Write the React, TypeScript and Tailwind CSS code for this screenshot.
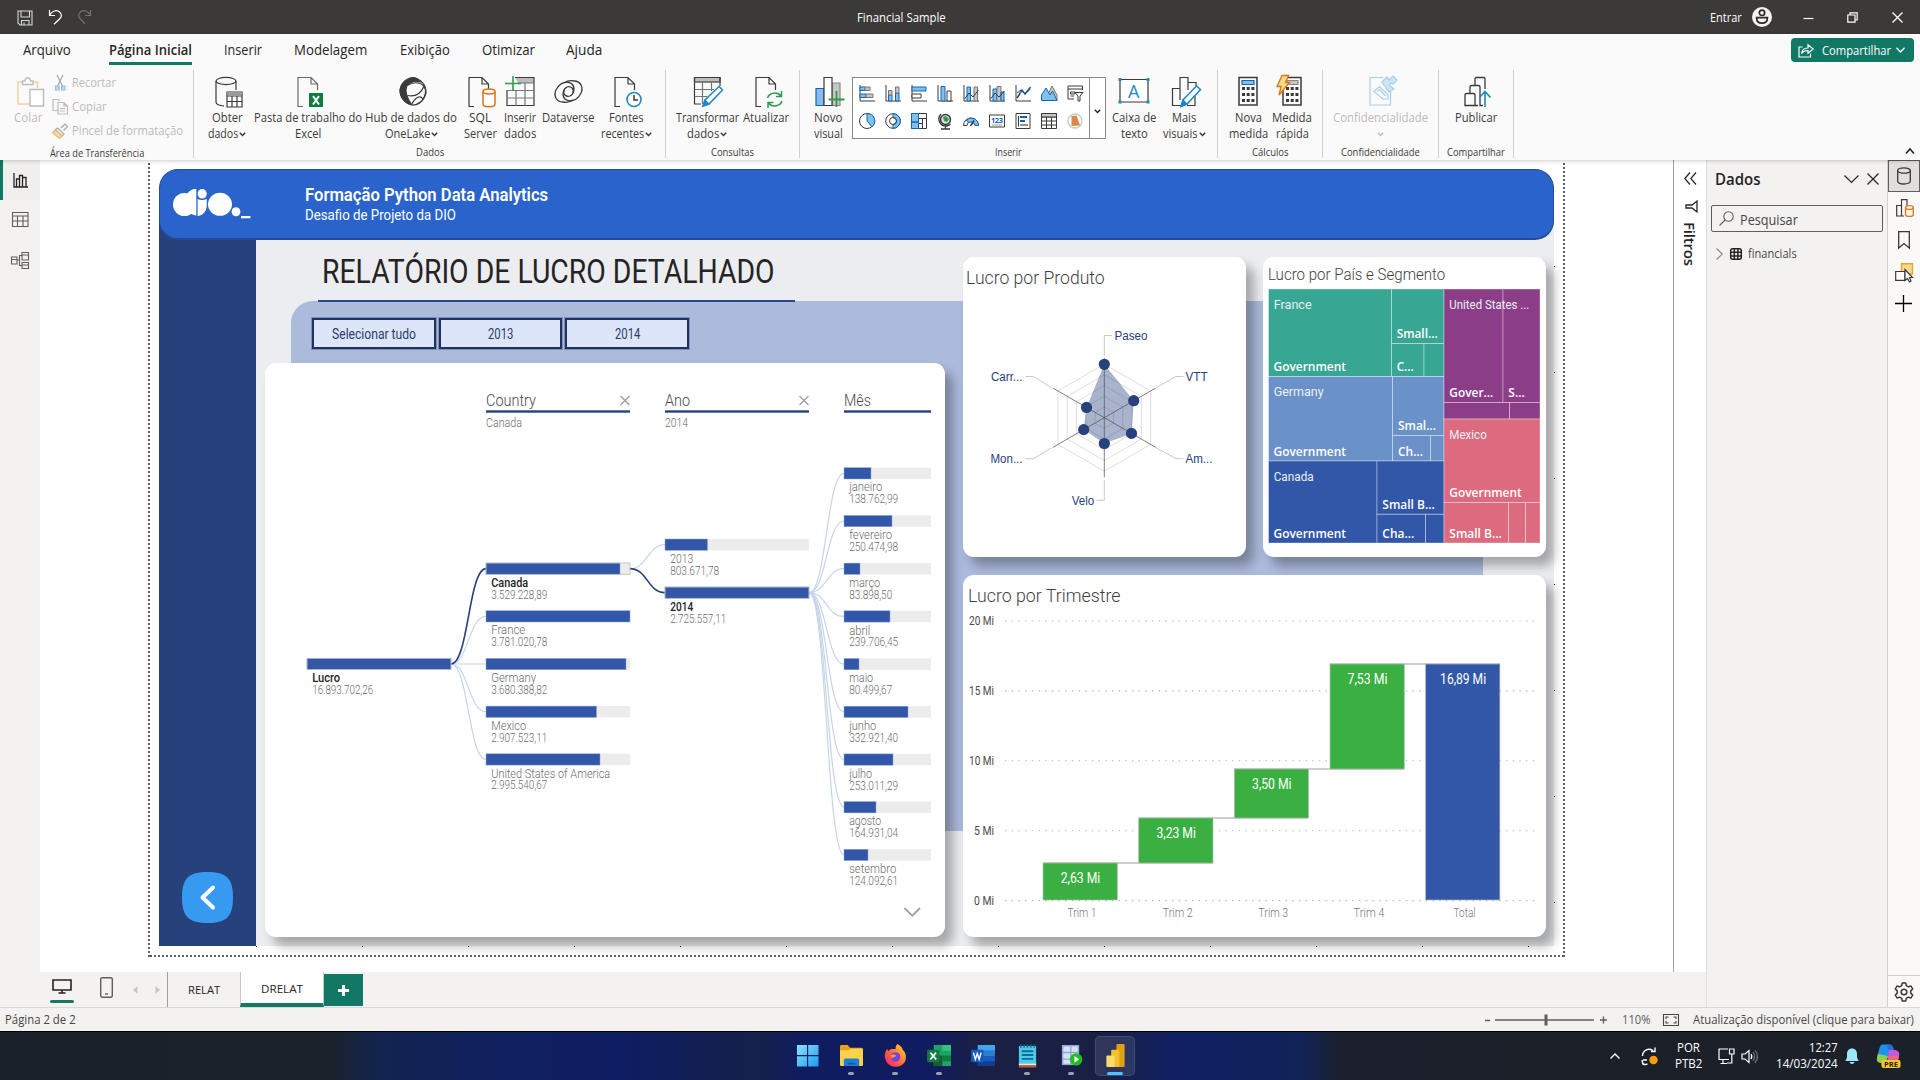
import React, { useLayoutEffect, useRef, useState } from "react";

type Kids = { children?: React.ReactNode };

/* Text set to an exact measure: the glyph run is condensed to the width given. */
function Fit({ w, className = "", children }: { w: number; className?: string } & Kids) {
  const ref = useRef<HTMLSpanElement>(null);
  const [k, setK] = useState(1);
  useLayoutEffect(() => {
    const el = ref.current;
    if (el && el.offsetWidth) setK(w / el.offsetWidth);
  }, [w]);
  return (
    <span className={"inline-block shrink-0 overflow-visible text-left " + className} style={{ width: w }}>
      <span ref={ref} className="inline-block origin-left whitespace-nowrap" style={{ transform: `scaleX(${k})` }}>
        {children}
      </span>
    </span>
  );
}

function Svg({ w, h, x = 0, y = 0, sw = 1.2, className = "", children }: { w: number; h: number; x?: number; y?: number; sw?: number; className?: string } & Kids) {
  return (
    <svg width={w} height={h} viewBox={`${x} ${y} ${w} ${h}`} fill="none" stroke="currentColor" strokeWidth={sw} className={"shrink-0 overflow-visible " + className}>
      {children}
    </svg>
  );
}

function ST({ x, y, w, s = 12, c = "#6f6f6f", b = 400, f = "Roboto, sans-serif", children }: { x: number; y: number; w: number; s?: number; c?: string; b?: number; f?: string; children: string }) {
  return (
    <text x={x} y={y} fontSize={s} fill={c} stroke="none" fontWeight={b} fontFamily={f} textLength={w} lengthAdjust="spacingAndGlyphs">
      {children}
    </text>
  );
}

const Caret = ({ className = "" }: { className?: string }) => (
  <Svg w={7} h={5} sw={1.4} className={className}>
    <path d="M0.8 0.8 L3.5 3.6 L6.2 0.8" />
  </Svg>
);

/* ---------- title bar ---------- */
function TitleBar() {
  return (
    <header className="grid h-[34px] grid-cols-3 items-center bg-[#3b3a39] text-white">
      <div className="flex items-center gap-[14px] pl-[17px]">
        <Svg w={17} h={16} sw={1.1} className="mt-[2px] text-[#d8d8d8]">
          <path d="M1 1 H15 V15 H3 L1 13 Z M4 1 V7 H12.5 V1 M4.5 15 V10.5 H12 V15 M7 12.5 V15" />
        </Svg>
        <Svg w={15} h={16} sw={1.2}>
          <path d="M1.5 1 V6.5 H7 M1.5 6.3 C4 1.6 8.5 0.6 11.3 2.7 C14 5 13.8 7.5 12 9.5 L6 15.3" />
        </Svg>
        <Svg w={15} h={16} sw={1.2} className="text-[#73716f]">
          <path d="M13.5 1 V6.5 H8 M13.5 6.3 C11 1.6 6.5 0.6 3.7 2.7 C1 5 1.2 7.5 3 9.5 L8 14.8" />
        </Svg>
      </div>
      <div className="flex justify-center">
        <Fit w={89} className="mt-px mr-[118px] text-[12px]">Financial Sample</Fit>
      </div>
      <div className="flex items-center justify-end pr-[17px]">
        <Fit w={32} className="mt-px mr-[10px] text-[12px]">Entrar</Fit>
        <Svg w={20} h={20} className="mr-[31px]">
          <circle cx="10" cy="10" r="10" fill="#f3f2f1" stroke="none" />
          <circle cx="10" cy="5.8" r="2.7" stroke="#2b2a29" strokeWidth="1.7" />
          <path d="M4.6 10.7 H15.4 C15.4 14 13.4 16.2 10 16.2 C6.6 16.2 4.6 14 4.6 10.7 Z" stroke="#2b2a29" strokeWidth="1.7" />
        </Svg>
        <Svg w={11} h={11} className="mr-[33px]"><path d="M0.5 6.5 H10.5" /></Svg>
        <Svg w={11} h={11} className="mr-[34px]"><path d="M0.8 3 H8 V10.2 H0.8 Z M3 3 V0.9 H10.2 V8 H8" /></Svg>
        <Svg w={11} h={11} sw={1.3}><path d="M0.5 0.5 L10.5 10.5 M10.5 0.5 L0.5 10.5" /></Svg>
      </div>
    </header>
  );
}

/* ---------- tabs ---------- */
const menu: { t: string; w: number; ml: string; on?: boolean }[] = [
  { t: "Arquivo", w: 48, ml: "ml-[23px]" },
  { t: "Página Inicial", w: 83, ml: "ml-[38px]", on: true },
  { t: "Inserir", w: 38, ml: "ml-[32px]" },
  { t: "Modelagem", w: 73, ml: "ml-[32px]" },
  { t: "Exibição", w: 50, ml: "ml-[33px]" },
  { t: "Otimizar", w: 53, ml: "ml-[32px]" },
  { t: "Ajuda", w: 36, ml: "ml-[31px]" },
];

function MenuBar() {
  return (
    <nav className="flex h-[36px] items-start justify-between">
      <div className="flex text-[14px] text-[#252423]">
        {menu.map((m) => (
          <div key={m.t} className={m.ml + (m.on ? " h-[31px] border-b-[3px] border-[#117865] font-semibold" : " h-[31px]")}>
            <Fit w={m.w} className="mt-[5px] leading-[22px]">{m.t}</Fit>
          </div>
        ))}
      </div>
      <button className="mt-[4px] mr-[6px] flex h-[24px] w-[123px] items-center rounded-[4px] bg-[#117865] pl-[7px] text-[12px] text-white">
        <Svg w={16} h={15} sw={1.2}>
          <path d="M4.5 4 H1 V14 H12.5 V10.5" />
          <path d="M3.5 10.5 C4 7 6.5 5 10 5 V1.8 L15.2 6 L10 10.2 V7.5 C7 7.5 5 8.5 3.5 10.5 Z" />
        </Svg>
        <Fit w={69} className="mt-[2px] ml-[8px] font-medium">Compartilhar</Fit>
        <Svg w={9} h={6} sw={1.3} className="ml-[5px]"><path d="M0.5 0.8 L4.5 5 L8.5 0.8" /></Svg>
      </button>
    </nav>
  );
}

/* ---------- ribbon icons ---------- */
const K = "#3b3a39";
const doc = <path d="M6 30.5 H1 V1.5 H14 L20.5 8 V14 M14 1.5 V8 H20.5" stroke={K} />;
const ic = {
  obter: (
    <Svg w={28} h={32} className="ml-[4px]">
      <ellipse cx="11" cy="5" rx="10" ry="3.6" stroke={K} />
      <path d="M1 5 V26 C1 28 4 29.6 9 30 M21 5 V14" stroke={K} />
      <path d="M12 16 H27 V31 H12 Z" fill="#fff" stroke={K} />
      <path d="M12 16.5 H27 V19 H12 Z" fill="#9a9a9a" stroke="none" />
      <path d="M12 20 H27 M12 25.5 H27 M17 20 V31 M22 20 V31" stroke={K} />
    </Svg>
  ),
  excel: (
    <Svg w={26} h={32} className="ml-[3px]">
      <g opacity="0.75">{doc}</g>
      <path d="M12 17 H26 V31 H12 Z" fill="#107c41" stroke="none" />
      <path d="M16 20 L22 28.5 M22 20 L16 28.5" stroke="#fff" strokeWidth="2" />
    </Svg>
  ),
  hub: (
    <Svg w={28} h={32} className="ml-[3px]">
      <path d="M14 1.5 C22 3 27.500 9 27 17 C25 24 20 29 13 29 C5 27 1 21 1 14 C2 7 7 2 14 1.5 Z" stroke={K} />
      <path d="M8.500 4 C12 0.500 18 1 21.500 6 C17 4.500 11.500 6 8 9.500 C5.500 15 8 22 12.500 28.500 C5 26.500 0.800 20 1.200 14 C2 9 5 5.500 8.500 4 Z" fill={K} stroke={K} />
      <path d="M8 9.500 C14 5.500 21 6 25 10 C22 17.500 16 21 8.500 19.500 M25 10 C27 14 27 19 24 23 C21 19 17 20.500 12.500 28.500" stroke={K} />
    </Svg>
  ),
  sql: (
    <Svg w={28} h={32} className="ml-[4px]">
      {doc}
      <path d="M15 15.500 V28 C15 30 18 30.800 21 30.800 C24 30.800 27 30 27 28 V15.500" fill="#fff" stroke="#d9731a" strokeWidth="1.5" />
      <ellipse cx="21" cy="15.500" rx="6" ry="2.4" fill="#fff" stroke="#d9731a" strokeWidth="1.5" />
    </Svg>
  ),
  inserir: (
    <Svg w={30} h={32}>
      <path d="M10 1.5 H29 V7 H13 Z" fill="#bdbdbd" stroke="none" />
      <path d="M10 1.5 H29 V29.5 H2 V14" stroke={K} />
      <path d="M13 7 H29 M2 14.5 H29 M2 22 H29 M11 14 V29.5 M20 7 V29.5" stroke="#777" />
      <path d="M8 0 V15 M0 7.5 H16" stroke="#2a9d4a" strokeWidth="1.600" />
    </Svg>
  ),
  dataverse: (
    <Svg w={29} h={32} sw={1.3}>
      <g stroke={K}>
        <path d="M20 5 C27 5 30 12 26.5 18 C23 24.5 15.5 27 11 23 C7.5 19.5 9 13 13 11 C17 9.5 20.5 13 19 17" />
        <path d="M9 26 C2 26 -1 19 2.5 13 C6 6.500 13.500 4 18 8 C21.500 11.500 20 18 16 20 C12 21.500 8.500 18 10 14" />
        <path d="M20 5 C16 4 13 5 10 7 M9 26 C13 27 16 26 19 24" />
      </g>
    </Svg>
  ),
  fontes: (
    <Svg w={28} h={32} className="ml-[4px]">
      {doc}
      <circle cx="20" cy="23.500" r="7" fill="#fff" stroke="#2088c9" strokeWidth="1.600" />
      <path d="M20 19 V24 H24" stroke={K} strokeWidth="1.500" />
    </Svg>
  ),
  transformar: (
    <Svg w={30} h={32} className="ml-px">
      <path d="M1.500 1.500 H27 V6 H1.500 Z" fill="#bdbdbd" />
      <path d="M8 28 H1.500 V1.500 H27 V10" stroke={K} />
      <path d="M1.500 6 H27 M1.500 13.500 H21 M1.500 20.500 H14 M9.500 6 V28 M18.500 6 V15" stroke="#777" />
      <path d="M10 30 L12 24 L26 10.500 L29.500 14 L16 28 Z" fill="#fff" stroke="#2088c9" strokeWidth="1.500" />
      <path d="M10 30 L12 24 L16 28 Z" fill="#2088c9" stroke="#2088c9" />
    </Svg>
  ),
  atualizar: (
    <Svg w={28} h={32} className="ml-[5px]">
      {doc}
      <path d="M12.500 22 C14 17 22 15 26 20 M26.500 15 V20.500 H21 M27 25 C25.500 30 17.500 32 13.500 27 M13 32 V26.500 H18.500" stroke="#2f9a52" strokeWidth="1.500" />
    </Svg>
  ),
  novo: (
    <Svg w={30} h={32} className="ml-[3px]">
      <path d="M1 12.500 H9 V29.500 H1 Z" fill="#83beec" stroke="#1068b5" />
      <path d="M17 7 H25 V29.500 H17 Z" fill="#c8c6c4" stroke="#8a8886" />
      <path d="M9 1.500 H17 V29.500 H9 Z" fill="#fff" stroke={K} />
      <path d="M21.500 15 V31 M13.500 23.500 H29.500" stroke="#2a9d4a" strokeWidth="1.800" />
    </Svg>
  ),
  caixa: (
    <Svg w={32} h={32}>
      <path d="M2 3.500 H30 V26 H2 Z" stroke={K} fill="#fff" />
      <path d="M0.500 2 H3.500 V5 H0.500 Z M28.500 2 H31.500 V5 H28.500 Z M0.500 24.500 H3.500 V27.500 H0.500 Z M28.500 24.500 H31.500 V27.500 H28.500 Z" fill="#2088c9" stroke="none" />
      <text x="10" y="21.500" fontSize="18" fill="#2088c9" stroke="none" fontFamily="Open Sans, sans-serif">A</text>
    </Svg>
  ),
  mais: (
    <Svg w={30} h={32} className="ml-[3px]">
      <path d="M10 29.500 H1.500 V12.500 H9 M9 24 V1.500 H17 V14 M17 6.500 H25 V10 M24 20 V29.500 H16" stroke={K} />
      <path d="M10 30.500 L12 24 L25.500 10 L29.500 13.500 L16 28 Z" fill="#fff" stroke="#2088c9" strokeWidth="1.500" />
      <path d="M10 30.500 L12 24 L16 28 Z" fill="#2088c9" stroke="#2088c9" />
    </Svg>
  ),
  nova: (
    <Svg w={20} h={32}>
      <path d="M1 1.500 H19 V29 H1 Z" fill="#fff" stroke={K} strokeWidth="1.500" />
      <path d="M4 4.500 H16 V8.500 H4 Z" fill="#83beec" stroke="#1068b5" />
      <path d="M4 12.500 H16.500 M4 18.500 H16.500 M4 24.500 H16.500" stroke={K} strokeWidth="3" strokeDasharray="3 1.700" />
    </Svg>
  ),
  rapida: (
    <Svg w={26} h={32} className="mr-[6px]">
      <path d="M7 1.500 H25 V29 H7 Z" fill="#fff" stroke={K} strokeWidth="1.500" />
      <path d="M11 4.500 H22 V8.500 H11 Z" fill="#c8c6c4" stroke="#8a8886" />
      <path d="M10 12.500 H22.500 M10 18.500 H22.500 M10 24.500 H22.500" stroke={K} strokeWidth="3" strokeDasharray="3 1.700" />
      <path d="M6 -0.500 H12.500 L9.500 6.500 H13.500 L3 19 L5 10.500 H1 Z" fill="#fbd98b" stroke="#d9731a" strokeWidth="1.300" />
    </Svg>
  ),
  conf: (
    <Svg w={28} h={32} sw={1.200} className="ml-[5px] text-[#a5cfe8]">
      <path d="M14 1.500 H1 V29 H21.500 V16" />
      <path d="M5 15.500 L10.500 10.500 L19 19 V23 L14 23 Z M8 15.500 L10.500 13.500 L16.500 20" />
      <path d="M13 6 L18 1 L20 4 L24 0 L28 4 L24 8 L22 7 L20 9 L25 13 L20 16 Z" fill="#a5cfe8" fillOpacity="0.500" />
    </Svg>
  ),
  publicar: (
    <Svg w={28} h={32} sw={1.300} className="ml-[4px]">
      <path d="M14 29.500 H1 V19 Q1 17.500 2.500 17.500 H9.500 Q11 17.500 11 19 V29.500 M6 17.500 V11 Q6 9.500 7.500 9.500 H14.500 Q16 9.500 16 11 V29.500 H19 M11 9.500 V3 Q11 1.500 12.500 1.500 H19.500 Q21 1.500 21 3 V13" stroke={K} />
      <path d="M21 31 V16 M15.500 21.500 L21 15.500 L26.500 21.500" stroke="#2088c9" strokeWidth="1.600" />
    </Svg>
  ),
};

function Btn({ icon, a, aw, b, bw, caret, box, dim }: { icon: React.ReactNode; a: string; aw: number; b?: string; bw?: number; caret?: boolean; box: string; dim?: boolean }) {
  return (
    <div className={"flex flex-col items-center pt-[6px] text-[12px] leading-4 " + box + (dim ? " text-[#bebbb8]" : " text-[#3b3a39]")}>
      {icon}
      <Fit w={aw} className="mt-[2px] h-4">{a}</Fit>
      <div className="flex h-4 items-center gap-[1px]">
        {b && <Fit w={bw || 30} className="h-4">{b}</Fit>}
        {caret && <Caret />}
      </div>
    </div>
  );
}

function Group({ box, label, lw, children }: { box: string; label: string; lw: number } & Kids) {
  return (
    <section className={"flex h-[88px] flex-col border-r border-[#d2d0ce] " + box}>
      <div className="flex h-[75px]">{children}</div>
      <div className="flex justify-center pt-[2px] text-[10.500px] leading-[16px] text-[#3b3a39]">
        <Fit w={lw}>{label}</Fit>
      </div>
    </section>
  );
}

const B = "#83beec", BS = "#1068b5", G = "#c8c6c4";
const gallery: React.ReactNode[] = [
  <><path d="M1 0 V16 H16" /><path d="M1 2 H6 V5.500 H1 Z" fill={B} stroke={BS} /><path d="M6 2 H11 V5.500 H6 Z" fill={G} stroke="#777" /><path d="M1 9 H7 V12.500 H1 Z" fill={B} stroke={BS} /><path d="M7 9 H14 V12.500 H7 Z" fill={G} stroke="#777" /></>,
  <><path d="M1 0 V16 H16" /><path d="M3.500 10 H7 V16 H3.500 Z" fill={B} stroke={BS} /><path d="M3.500 5.500 H7 V10 H3.500 Z" fill={G} stroke="#777" /><path d="M10.500 8 H14 V16 H10.500 Z" fill={B} stroke={BS} /><path d="M10.500 2 H14 V8 H10.500 Z" fill={G} stroke="#777" /></>,
  <><path d="M1 0 V16 H16" /><path d="M1 2 H15 V6 H1 Z" fill={B} stroke={BS} /><path d="M1 9 H10 V13 H1 Z" fill="#fff" /></>,
  <><path d="M1 0 V16 H16" /><path d="M4 1.500 H8 V16 H4 Z" fill={B} stroke={BS} /><path d="M10 6 H14 V16 H10 Z" fill="#fff" /></>,
  <><path d="M1 0 V16 H16" /><path d="M4 2 H7.500 V16 H4 Z" fill={B} stroke={BS} /><path d="M11 2 H14.500 V16 H11 Z" fill={G} stroke="#777" /><path d="M1.500 14 L6 8 L10 12 L15.500 5" /></>,
  <><path d="M1 0 V16 H16" /><path d="M4 4 H8 V16 H4 Z" fill={B} stroke={BS} /><path d="M8 1.500 H12 V16 H8 Z" fill={G} stroke="#777" /><path d="M12 7 H15 V16 H12 Z" fill={B} stroke={BS} /><path d="M1.500 14 L6 8 L10 12 L15.500 6" /></>,
  <><path d="M1 0 V16 H16" /><path d="M2 13 L7 5 L10 9 L15.500 2" stroke={BS} strokeWidth="1.500" /><path d="M2 8 L6 5 L10 9 L15.500 4 M2 13 L5 9" /></>,
  <><path d="M4 15.500 L11 1 L16 10 V15.500 Z" fill={G} stroke="#777" /><path d="M0.500 15.500 V10 L5 3 L9 10 L11.500 6 L16 15.500 Z" fill={B} stroke={BS} /></>,
  <><path d="M7 14 H1 V1 H15.500 V5 M1 4 H15.500 M3.500 7 H8 V9 H3.500 Z M3.500 11 H7" /><path d="M8 7.500 H16 L13 11 V16 H11 V11 Z" fill="#fff" /></>,
  <><circle cx="8" cy="8" r="7.500" fill="#fff" /><path d="M8 0.500 A7.500 7.500 0 0 1 13 13.800 L8 8 Z" fill={B} stroke={BS} /></>,
  <><circle cx="8" cy="8" r="7.300" fill="#fff" /><path d="M8 0.700 A7.300 7.300 0 0 1 8 15.300 L8 11.500 A3.500 3.500 0 0 0 8 4.500 Z" fill={B} stroke={BS} /><circle cx="8" cy="8" r="3.500" /></>,
  <><path d="M0.500 0.500 H15.500 V15.500 H0.500 Z M7.500 5.500 H15.500 M11.500 5.500 V15.500 M7.500 10.500 H11.500" /><path d="M0.500 0.500 H7.500 V9 H0.500 Z M0.500 9 H7.500 V15.500 H0.500 Z" fill={B} stroke={BS} /></>,
  <><circle cx="8.500" cy="6.500" r="5" fill="#cfe9d6" stroke={K} strokeWidth="1.500" /><path d="M6 4 L9 3 L12 6 L10 9 L7 8 Z" fill="#2f9a52" stroke="none" /><path d="M4 1 C-0.500 6 3 13 9 13 C11 13 12 12.500 13.500 11 M8.500 13 V16 M4 16 H13" strokeWidth="1.300" /></>,
  <><path d="M0.500 12.500 A7.500 7.500 0 0 1 15.500 12.500 H12 A4 4 0 0 0 4 12.500 Z" fill="#fff" /><path d="M3 7 A7.500 7.500 0 0 1 15.500 12.500 H12 A4 4 0 0 0 6 9.500 Z" fill={B} stroke={BS} /><path d="M7.500 13 L11 7.500" strokeWidth="1.500" /></>,
  <><path d="M0.500 2 H15.500 V14 H0.500 Z" fill="#fff" /><text x="2" y="9.800" fontSize="7.500" fontWeight="700" fill={BS} stroke="none" fontFamily="Open Sans, sans-serif" textLength="12">123</text><path d="M3 12 H13" stroke="#999" /></>,
  <><path d="M1 0.500 H15 V15.500 H1 Z" fill="#fff" /><path d="M3.500 3 V13.500" /><path d="M5 4 H12 M5 8 H10" stroke={BS} strokeWidth="2" /><path d="M5 12 H13" stroke="#777" strokeWidth="1.600" /></>,
  <><path d="M0.500 0.500 H15.500 V15.500 H0.500 Z M0.500 4 H15.500 M0.500 8 H15.500 M0.500 12 H15.500 M5.500 4 V15.500 M10.500 4 V15.500" fill="#fff" /><path d="M0.500 0.500 H15.500 V4 H0.500 Z" fill={G} /></>,
  <><circle cx="8" cy="8" r="7" stroke="#c9c7c5" strokeWidth="1.300" /><path d="M4.500 3 L9.500 2.500 L13 12.500 L4.500 13 Z" fill="#d98a4a" stroke="none" /></>,
];

function Ribbon() {
  return (
    <div className="flex h-[90px]">
      <Group box="w-[194px]" label="Área de Transferência" lw={94}>
        <div className="flex w-[46px] flex-col items-start pt-[6px] pl-[14px] text-[12px] leading-4 text-[#bebbb8]">
          <Svg w={28} h={32} className="ml-[3px]">
            <path d="M6 6 H1 V28 H13 M16 6 H20.500 V12" stroke="#f3cf9f" strokeWidth="1.500" />
            <path d="M5.500 8.500 V5 H8 C8.500 0.500 13 0.500 13.500 5 H16 V8.500 Z M13 13.500 H26.500 V30 H13 Z" fill="#fff" stroke="#bebbb8" strokeWidth="1.400" />
          </Svg>
          <Fit w={28} className="mt-[2px]">Colar</Fit>
        </div>
        <div className="flex flex-col text-[12px] leading-[24px] text-[#bebbb8]">
          <div className="mt-px flex h-6 items-center pl-[6px]">
            <Svg w={20} h={16}><path d="M5 0 L10.500 11 M11 0 L5.500 11" stroke="#a8a6a4" /><path d="M3.500 11 H7 V15 H3.500 Z M9.500 11 H13 V15 H9.500 Z" stroke="#8fbfe0" fill="#bcdcf0" /></Svg>
            <Fit w={44}>Recortar</Fit>
          </div>
          <div className="flex h-6 items-center pl-[6px]">
            <Svg w={20} h={16}><path d="M6 11.500 H1 V0.500 H6 L7.500 2" /><path d="M6 3.500 H12 L15.500 7 V15 H6 Z M12 3.500 V7 H15.500 M8 9.500 H13 M8 12 H13" /></Svg>
            <Fit w={35}>Copiar</Fit>
          </div>
          <div className="flex h-6 items-center pl-[6px]">
            <Svg w={20} h={16}><path d="M9 5 L13 1 L15.500 3.500 L11.500 7.500 M5.500 5 L12 11 L10 13 L3.500 6.500 Z" stroke="#a8a6a4" /><path d="M3.500 7 L10 13 L7.500 15.500 L0.500 9.500 Z" fill="#f9dcae" stroke="#eab66e" /></Svg>
            <Fit w={111}>Pincel de formatação</Fit>
          </div>
        </div>
      </Group>
      <Group box="w-[472px] [&>div:first-child]:pl-[8px]" label="Dados" lw={28}>
        <Btn box="w-[50px]" icon={ic.obter} a="Obter" aw={31} b="dados" bw={30} caret />
        <Btn box="w-[112px]" icon={ic.excel} a="Pasta de trabalho do" aw={108} b="Excel" bw={26} />
        <Btn box="w-[94px]" icon={ic.hub} a="Hub de dados do" aw={92} b="OneLake" bw={45} caret />
        <Btn box="ml-[2px] w-[40px]" icon={ic.sql} a="SQL" aw={22} b="Server" bw={33} />
        <Btn box="w-[40px]" icon={ic.inserir} a="Inserir" aw={32} b="dados" bw={32} />
        <Btn box="w-[56px]" icon={ic.dataverse} a="Dataverse" aw={52} />
        <Btn box="w-[62px] -ml-px" icon={ic.fontes} a="Fontes" aw={35} b="recentes" bw={43} caret />
      </Group>
      <Group box="w-[134px] [&>div:first-child]:pl-[8px]" label="Consultas" lw={43}>
        <Btn box="w-[66px]" icon={ic.transformar} a="Transformar" aw={63} b="dados" bw={32} caret />
        <Btn box="w-[52px]" icon={ic.atualizar} a="Atualizar" aw={46} />
      </Group>
      <Group box="w-[418px] [&>div:first-child]:pl-[10px]" label="Inserir" lw={27}>
        <Btn box="w-[36px]" icon={ic.novo} a="Novo" aw={28} b="visual" bw={29} />
        <div className="mt-[7px] ml-[6px] flex h-[62px] w-[254px] border border-[#8a8886] bg-white">
          <div className="grid w-[236px] grid-cols-9 grid-rows-2 items-center justify-items-center px-[1px] pt-px pb-[3px] text-[#3b3a39]">
            {gallery.map((g, i) => <Svg key={i} w={16} h={16} sw={1}>{g}</Svg>)}
          </div>
          <div className="flex flex-1 items-center justify-center border-l border-[#8a8886]"><Caret className="mt-[6px]" /></div>
        </div>
        <Btn box="ml-[2px] w-[52px]" icon={ic.caixa} a="Caixa de" aw={44} b="texto" bw={27} />
        <Btn box="w-[48px]" icon={ic.mais} a="Mais" aw={24} b="visuais" bw={35} caret />
      </Group>
      <Group box="w-[105px] [&>div:first-child]:pl-[8px]" label="Cálculos" lw={37}>
        <Btn box="w-[44px]" icon={ic.nova} a="Nova" aw={27} b="medida" bw={39} />
        <Btn box="w-[44px]" icon={ic.rapida} a="Medida" aw={40} b="rápida" bw={33} />
      </Group>
      <Group box="w-[116px]" label="Confidencialidade" lw={79}>
        <Btn box="w-[115px]" icon={ic.conf} a="Confidencialidade" aw={95} caret dim />
      </Group>
      <Group box="w-[75px]" label="Compartilhar" lw={58}>
        <Btn box="w-[74px]" icon={ic.publicar} a="Publicar" aw={42} />
      </Group>
      <div className="flex flex-1 items-end justify-end pr-[5px] pb-[6px]">
        <Svg w={10} h={6} sw={1.600}><path d="M1 5.500 L5 1 L9 5.500" /></Svg>
      </div>
    </div>
  );
}

/* ---------- decomposition tree ---------- */
const NAVY = "#27417d";
const BLUE = "#3257a8";
const STEP = 47.7;
const months: [string, number, string, number][] = [
  ["janeiro", 33, "138.762,99", 27],
  ["fevereiro", 43, "250.474,98", 48],
  ["março", 31, "83.898,50", 16],
  ["abril", 21, "239.706,45", 46],
  ["maio", 24, "80.499,67", 15],
  ["junho", 27, "332.921,40", 64],
  ["julho", 23, "253.011,29", 49],
  ["agosto", 32, "164.931,04", 32],
  ["setembro", 47, "124.092,61", 24],
];
const countries: [string, number, string, number][] = [
  ["Canada", 37, "3.529.228,89", 134],
  ["France", 34, "3.781.020,78", 144],
  ["Germany", 45, "3.680.388,82", 140],
  ["Mexico", 35, "2.907.523,11", 110.500],
  ["United States of America", 119, "2.995.540,67", 114],
];

function Node({ x, y, full, fill, name, nw, value, vw, on }: { x: number; y: number; full: number; fill: number; name: string; nw: number; value: string; vw: number; on?: boolean }) {
  return (
    <g>
      <rect x={x} y={y} width={full} height={11.300} fill="#ececec" stroke="none" />
      <rect x={x} y={y} width={fill} height={11.300} fill={BLUE} stroke="#8fa6d3" strokeWidth={0.500} />
      {on && <rect x={x} y={y} width={full} height={11.300} stroke="#bdbdbd" strokeWidth={0.800} />}
      <ST x={x + 5.200} y={y + 23.700} w={nw} s={12} c={on ? "#252423" : "#6d6d6d"} b={on ? 500 : 300}>{name}</ST>
      <ST x={x + 5.200} y={y + 35.600} w={vw} s={12} c="#6d6d6d" b={300}>{value}</ST>
    </g>
  );
}

const link = (x1: number, y1: number, x2: number, y2: number) => `M${x1} ${y1} C${(x1 + x2) / 2} ${y1} ${(x1 + x2) / 2} ${y2} ${x2} ${y2}`;

function Tree() {
  const heads: [string, number, number, number, string, number][] = [
    ["Country", 486, 50, 144, "Canada", 36],
    ["Ano", 665, 25, 144, "2014", 23],
    ["Mês", 844, 27, 87, "", 0],
  ];
  return (
    <Svg w={680} h={574} x={265} y={363}>
      {heads.map(([t, x, w, lw, sub, sw]) => (
        <g key={t}>
          <ST x={x} y={405.600} w={w} s={16} c="#4a4a4a" b={300}>{t}</ST>
          <rect x={x} y={410.300} width={lw} height={2.400} fill={NAVY} stroke="none" />
          {sub && <ST x={x} y={426.500} w={sw} s={12} c="#6d6d6d" b={300}>{sub}</ST>}
          {sub && <path d={`M${x + 134.500} 396 l9 9 m0 -9 l-9 9`} stroke="#a5a3a1" strokeWidth={1.500} />}
        </g>
      ))}
      <g stroke="#c6d4ea" strokeWidth={1.200}>
        {[1, 2, 3, 4].map((i) => <path key={i} d={link(451, 664, 486, 568.600 + STEP * i)} />)}
        <path d={link(630, 568.600, 665, 544.700)} />
        {months.map((m, i) => <path key={m[0]} d={link(809, 592.600, 844, 473.300 + STEP * i)} />)}
      </g>
      <g stroke={NAVY} strokeWidth={1.600}>
        <path d={link(451, 664, 486, 568.600)} />
        <path d={link(630, 568.600, 665, 592.600)} />
      </g>
      <Node x={307} y={658.300} full={144} fill={144} name="Lucro" nw={28} value="16.893.702,26" vw={61} on />
      {countries.map(([n, nw, v, f], i) => (
        <Node key={n} x={486} y={563 + STEP * i} full={144} fill={f} name={n} nw={nw} value={v} vw={56} on={i === 0} />
      ))}
      <Node x={665} y={539} full={144} fill={42.500} name="2013" nw={23} value="803.671,78" vw={49} />
      <Node x={665} y={587} full={144} fill={144} name="2014" nw={23} value="2.725.557,11" vw={56} on />
      {months.map(([n, nw, v, f], i) => (
        <Node key={n} x={844} y={467.700 + STEP * i} full={87} fill={f} name={n} nw={nw} value={v} vw={v.length > 9 ? 49 : 43} />
      ))}
      <path d="M904.500 908 L912.300 915.800 L920 908" stroke="#a19f9d" strokeWidth={1.800} />
    </Svg>
  );
}

/* ---------- radar ---------- */
function Radar() {
  const cx = 1104.300, cy = 417.700;
  const pt = (r: number, i: number) => {
    const a = (Math.PI / 3) * i - Math.PI / 2;
    return [cx + r * Math.cos(a), cy + r * Math.sin(a)];
  };
  const ring = (r: number) => [0, 1, 2, 3, 4, 5].map((i) => pt(r, i).join(",")).join(" ");
  const vals = [53.400, 34, 31.400, 25.800, 23.800, 20.500];
  const labels: [string, number, number, number][] = [
    ["Paseo", 1114.500, 340, 33], ["VTT", 1185.500, 381, 22], ["Am...", 1185.500, 463.300, 27],
    ["Velo", 1071.700, 504.700, 22.500], ["Mon...", 990.500, 463.300, 32], ["Carr...", 991, 381, 31.500],
  ];
  return (
    <Svg w={283} h={262} x={963} y={295}>
      {[1, 2, 3, 4, 5].map((n) => <polygon key={n} points={ring(10.700 * n)} stroke="#dedede" strokeWidth={1} />)}
      <g stroke="#c8c8c8" strokeWidth={1}>
        <path d="M1104.300 355.700 V335.500 H1112 M1104.300 480 V500.300 H1096.500 M1156.500 387.500 L1176 376.500 H1183.500 M1156.500 448 L1176 458.700 H1183.500 M1051 448 L1033.500 458.700 H1025.500 M1051 387.500 L1033.500 376.500 H1025.500" />
      </g>
      <polygon points={vals.map((r, i) => pt(r, i).join(",")).join(" ")} fill={NAVY} fillOpacity={0.400} stroke="none" />
      {[0, 1, 2, 3, 4, 5].map((i) => {
        const [x, y] = pt(59.500, i);
        return <line key={i} x1={cx} y1={cy} x2={x} y2={y} stroke="#555" strokeOpacity={0.750} strokeWidth={1} />;
      })}
      {vals.map((r, i) => {
        const [x, y] = pt(r, i);
        return <circle key={i} cx={x} cy={y} r={5.600} fill={NAVY} stroke="none" />;
      })}
      {labels.map(([t, x, y, w]) => <ST key={t} x={x} y={y} w={w} s={12.500} c={NAVY} f="Liberation Sans, sans-serif">{t}</ST>)}
    </Svg>
  );
}

/* ---------- treemap ---------- */
const tiles: [number, number, number, number, string][] = [
  [1268.500, 289, 1391.500, 376.500, "#37a794"], [1391.500, 289, 1444, 343.500, "#37a794"], [1391.500, 343.500, 1424, 376.500, "#37a794"], [1424, 343.500, 1444, 376.500, "#37a794"],
  [1268.500, 376.500, 1392.500, 461, "#6b91c9"], [1392.500, 376.500, 1444, 435.500, "#6b91c9"], [1392.500, 435.500, 1430.500, 461, "#6b91c9"], [1430.500, 435.500, 1444, 461, "#6b91c9"],
  [1268.500, 461, 1377, 543, "#3257a8"], [1377, 461, 1444, 514.300, "#3257a8"], [1377, 514.300, 1425.500, 543, "#3257a8"], [1425.500, 514.300, 1444, 543, "#3257a8"],
  [1444, 289, 1503, 402.500, "#8b3d88"], [1503, 289, 1540, 402.500, "#8b3d88"], [1444, 402.500, 1509.500, 419, "#8b3d88"], [1509.500, 402.500, 1540, 419, "#8b3d88"],
  [1444, 419, 1540, 502.500, "#dc6b7f"], [1444, 502.500, 1508.500, 543, "#dc6b7f"], [1508.500, 502.500, 1525.500, 543, "#dc6b7f"], [1525.500, 502.500, 1540, 543, "#dc6b7f"],
];
const regions: [string, number, number, number][] = [
  ["France", 1273.700, 309, 38], ["Germany", 1273.700, 396, 50], ["Canada", 1273.700, 481, 40], ["United States ...", 1449.300, 309, 80], ["Mexico", 1449.300, 439, 37.500],
];
const segs: [string, number, number, number][] = [
  ["Government", 1273.500, 371, 72.500], ["Small...", 1396.700, 338, 41], ["C...", 1396.700, 371, 17],
  ["Government", 1273.500, 456, 72.500], ["Smal...", 1398, 430, 38], ["Ch...", 1398, 456, 25],
  ["Government", 1273.500, 538, 72.500], ["Small B...", 1382.300, 509, 52.500], ["Cha...", 1382.300, 538, 32],
  ["Gover...", 1449.300, 397, 44], ["S...", 1508.300, 397, 16.500], ["Government", 1449.300, 497, 72.500], ["Small B...", 1449.300, 538, 52.500],
];
function Treemap() {
  return (
    <Svg w={283} h={270} x={1263} y={287}>
      {tiles.map(([a, b, c, d, f], i) => (
        <rect key={i} x={a} y={b} width={c - a} height={d - b} fill={f} stroke="#fff" strokeOpacity={0.350} strokeWidth={1} />
      ))}
      {regions.map(([t, x, y, w]) => <ST key={t} x={x} y={y} w={w} s={13.500} c="#e9f0f5">{t}</ST>)}
      {segs.map(([t, x, y, w], i) => <ST key={i} x={x} y={y} w={w} s={12.800} c="#fff" b={600} f="Open Sans, sans-serif">{t}</ST>)}
    </Svg>
  );
}

/* ---------- waterfall ---------- */
const bars: [string, string, number, number, number, number, number][] = [
  ["Trim 1", "2,63 Mi", 1043, 863, 900, 29, 39.500],
  ["Trim 2", "3,23 Mi", 1138.700, 818, 863, 30, 39.500],
  ["Trim 3", "3,50 Mi", 1234.300, 769, 818, 30, 39.500],
  ["Trim 4", "7,53 Mi", 1330, 664, 769, 31, 40],
  ["Total", "16,89 Mi", 1425.600, 664, 900, 22, 46],
];
function Waterfall() {
  return (
    <Svg w={583} h={326} x={963} y={611}>
      {[20, 15, 10, 5, 0].map((v, i) => (
        <g key={v}>
          <line x1={1005} x2={1537} y1={621 + i * 69.900} y2={621 + i * 69.900} stroke="#b8b6b4" strokeWidth={1.100} strokeDasharray="1.400 5.280" />
          <ST x={v > 9 ? 969 : 974} y={625.300 + i * 69.900} w={v > 9 ? 25 : 20} s={12.500} c="#4a4a4a">{`${v} Mi`}</ST>
        </g>
      ))}
      <path d="M1043 863 H1213 M1139 818 H1308 M1234 769 H1404 M1330 664 H1500" stroke="#bdbdbd" strokeWidth={1.500} />
      {bars.map(([t, v, x, a, b, tw, vw], i) => (
        <g key={t}>
          <rect x={x} y={a} width={74.300} height={b - a} fill={i === 4 ? BLUE : "#3ab042"} stroke="#b4bcb4" strokeWidth={0.700} />
          <ST x={x + 37.500 - vw / 2} y={a + 20.400} w={vw} s={14} c="#fff">{v}</ST>
          <ST x={x + 39 - tw / 2} y={917.300} w={tw} s={12} c="#777" b={300}>{t}</ST>
        </g>
      ))}
    </Svg>
  );
}

const cardCls = "rounded-[11px] bg-white shadow-[8px_9px_11px_rgba(0,0,0,0.3)]";

function Logo() {
  return (
    <svg width="78" height="30" viewBox="0 0 78 30" fill="#fff">
      <ellipse cx="11.500" cy="15.500" rx="11.500" ry="11.500" />
      <path d="M13 7 C16 1.500 19 0 23.300 0 V26.500 C19 26 16 24 15 20 Z" />
      <ellipse cx="29.200" cy="4.800" rx="4.600" ry="4.800" />
      <path d="M24.600 10 Q29 12 33.800 10 V16 C33.800 22 30 26.500 24.600 27 Z" />
      <ellipse cx="47" cy="15.300" rx="12" ry="11.500" />
      <ellipse cx="63" cy="22.700" rx="4.400" ry="4.500" />
      <rect x="68" y="27" width="9.500" height="2.300" />
    </svg>
  );
}

function Report() {
  return (
    <div className="relative h-[777px] w-[1395px]">
      <div className="relative z-10 flex h-[71px] items-center rounded-[19px] border border-b-2 border-[#254a97] bg-[#2963cb] pl-[13px] text-white">
        <Logo />
        <div className="mt-[2px] ml-[54px] flex flex-col font-[Roboto]">
          <Fit w={243} className="text-[18.500px] leading-[21px] font-semibold">Formação Python Data Analytics</Fit>
          <Fit w={151} className="text-[14.500px] leading-[19px]">Desafio de Projeto da DIO</Fit>
        </div>
      </div>
      <div className="-mt-5 flex h-[726px] bg-[#ecedf1]">
        <aside className="flex w-[97px] items-end justify-center bg-[#27417d] pb-[23px]">
          <svg width="51" height="51" viewBox="0 0 51 51" fill="none">
            <path d="M25.500 0 C44 0 51 6 51 25.500 C51 45 44 51 25.500 51 C7 51 0 45 0 25.500 C0 6 7 0 25.500 0 Z" fill="#369bf0" />
            <path d="M31 15.500 L20.500 25.500 L31 35.500" stroke="#fff" strokeWidth="4" strokeLinecap="round" strokeLinejoin="round" />
          </svg>
        </aside>
        <main className="relative flex flex-1">
          <div className="absolute top-[81px] left-[35px] h-[530px] w-[1192px] rounded-tl-[22px] bg-[#acbadc]" />
          <div className="relative flex w-[680px] flex-col pl-[9px] font-[Roboto] box-content">
            <div className="mt-[20px] ml-[53px] flex h-[62px] w-[477px] items-start border-b-2 border-[#2a4786] pl-[4px] pt-[11px]">
              <Fit w={453} className="text-[33.500px] leading-[42px] text-[#252423]">RELATÓRIO DE LUCRO DETALHADO</Fit>
            </div>
            <div className="mt-[16px] ml-[47px] flex gap-[3px] text-[14px] text-[#2b3d6e]">
              {([["Selecionar tudo", 84], ["2013", 25], ["2014", 25]] as [string, number][]).map(([t, w]) => (
                <div key={t} className="flex h-[31px] w-[123.700px] items-center justify-center border-2 border-[#1f3261] bg-[#dce6f8] pt-[2px] outline-1 -outline-offset-[0.500px] outline-[#7f8fb5]">
                  <Fit w={w}>{t}</Fit>
                </div>
              ))}
            </div>
            <section className={"mt-[14px] h-[574px] w-[680px] " + cardCls}><Tree /></section>
          </div>
          <div className="relative ml-[18px] flex w-[583px] flex-col pt-[37px] font-[Roboto] font-light text-[#3f3f3f]">
            <div className="flex gap-[17px]">
              <section className={"flex h-[300px] w-[283px] flex-col " + cardCls}>
                <Fit w={139} className="mt-[9px] ml-[3px] h-[29px] text-[19px] leading-[24px]">Lucro por Produto</Fit>
                <Radar />
              </section>
              <section className={"flex h-[300px] w-[283px] flex-col " + cardCls}>
                <Fit w={177} className="mt-[6px] ml-[5px] h-[24px] text-[16.500px] leading-[24px]">Lucro por País e Segmento</Fit>
                <Treemap />
              </section>
            </div>
            <section className={"mt-[18px] flex h-[362px] flex-col " + cardCls}>
              <Fit w={152} className="mt-[9px] ml-[5px] h-[27px] text-[18px] leading-[24px]">Lucro por Trimestre</Fit>
              <Waterfall />
            </section>
          </div>
        </main>
      </div>
    </div>
  );
}

function Canvas() {
  return (
    <div className="flex h-[812px] w-[1633px] bg-white pl-[108px]">
      <div className="mt-[3px] flex h-[794px]">
        <div className="w-[2px] bg-[repeating-linear-gradient(to_bottom,#605e5c_0,#605e5c_2px,transparent_2px,transparent_4px)]" />
        <div className="flex flex-col">
          <div className="h-[792px] pt-[6px] pr-[8px] pl-[9px]">
            <div className="flex">
              <Report />
              <div className="mt-[97px] h-[660px] w-px bg-[repeating-linear-gradient(to_bottom,#252423_0,#252423_1px,transparent_1px,transparent_106px)]" />
            </div>
            <div className="ml-[97px] h-px w-[1298px] bg-[repeating-linear-gradient(to_right,#252423_0,#252423_1px,transparent_1px,transparent_106px)]" />
          </div>
          <div className="h-[2px] bg-[repeating-linear-gradient(to_right,#605e5c_0,#605e5c_2px,transparent_2px,transparent_4px)]" />
        </div>
        <div className="w-[2px] bg-[repeating-linear-gradient(to_bottom,#605e5c_0,#605e5c_2px,transparent_2px,transparent_4px)]" />
      </div>
    </div>
  );
}

/* ---------- side rails ---------- */
function LeftRail() {
  return (
    <nav className="flex h-[812px] w-[40px] flex-col bg-[#f3f2f1]">
      <div className="flex h-[40px] items-center justify-center border-l-[3px] border-[#117865] bg-[#f0efed] pr-[3px]">
        <Svg w={15} h={15} sw={1.300} className="text-[#252423]"><path d="M1 0 V14 H15 M3.500 14 V6 H6.500 V14 M6.500 14 V2.500 H9.500 V14 M9.500 14 V4.500 H13 V14" /></Svg>
      </div>
      <div className="flex h-[40px] items-center justify-center pb-px">
        <Svg w={17} h={15} sw={1.100} className="text-[#605e5c]"><path d="M0.500 0.500 H16 V14.500 H0.500 Z M0.500 4 H16 M0.500 9 H16 M5.500 4 V14.500 M11 4 V14.500" /></Svg>
      </div>
      <div className="flex h-[40px] items-center justify-center">
        <Svg w={18} h={17} sw={1.100} className="text-[#605e5c]"><path d="M11 0.500 H17.500 V8 H11 Z M11 3 H17.500 M11 10.500 H17.500 V16.500 H11 Z M11 13 H17.500 M0.500 5 H6 V12 H0.500 Z M0.500 7.500 H6 M6 8 H8.500 V3.500 H11 M8.500 8 V13.500 H11" /></Svg>
      </div>
    </nav>
  );
}

function Filters() {
  return (
    <div className="flex h-[812px] w-[33px] flex-col items-center border-l border-[#a19f9d] bg-white text-[#252423]">
      <Svg w={13} h={13} className="mt-[12px]"><path d="M6 0.500 L0.800 6.500 L6 12.500 M12 0.500 L6.800 6.500 L12 12.500" /></Svg>
      <Svg w={13} h={13} sw={1.300} className="mt-[15px] ml-[3px]"><path d="M12 1 V12 L7 8 H1 V5 H7 Z" /></Svg>
      <div className="mt-[9px] [writing-mode:vertical-rl]">
        <span className="text-[15px] leading-5 font-semibold tracking-[-0.200px]">Filtros</span>
      </div>
    </div>
  );
}

function DataPane() {
  return (
    <aside className="flex h-[847px] w-[181px] flex-col border-l border-[#e1dfdd] bg-[#f3f2f1] pr-[4px] pl-[4px] text-[#252423]">
      <div className="flex h-[38px] items-center pl-[4px]">
        <Fit w={46} className="text-[16px] font-semibold">Dados</Fit>
        <Svg w={15} h={8} className="ml-[83px]"><path d="M0.500 0.500 L7.500 7.500 L14.500 0.500" /></Svg>
        <Svg w={12} h={12} className="ml-[8px]"><path d="M0.500 0.500 L11.500 11.500 M11.500 0.500 L0.500 11.500" /></Svg>
      </div>
      <div className="mt-[7px] flex h-[27px] items-center rounded-[2px] border border-[#605e5c] pl-[7px]">
        <Svg w={15} h={15} sw={1.100} className="text-[#605e5c]"><circle cx="9.500" cy="5.500" r="4.700" /><path d="M6 9 L0.500 14.500" /></Svg>
        <Fit w={58} className="mt-px ml-[6px] text-[14px] text-[#484644]">Pesquisar</Fit>
      </div>
      <div className="mt-[10px] flex h-[24px] items-center pl-[5px]">
        <Svg w={7} h={12} sw={1.100} className="text-[#8a8886]"><path d="M0.500 0.500 L6.300 6 L0.500 11.500" /></Svg>
        <Svg w={12} h={12} sw={1.500} className="ml-[7px]"><rect x="0.700" y="0.700" width="10.600" height="10.600" rx="2" /><path d="M4.300 0.700 V11.300 M7.900 0.700 V11.300 M0.700 4.300 H11.300 M0.700 7.900 H11.300" /></Svg>
        <Fit w={49} className="ml-[6px] text-[12px] text-[#484644]">financials</Fit>
      </div>
    </aside>
  );
}

function RightRail() {
  return (
    <nav className="flex h-[847px] w-[33px] flex-col items-center justify-between border-l border-[#d2d0ce] bg-[#faf9f8] text-[#3b3a39]">
      <div className="flex w-full flex-col items-center">
        <div className="flex h-[32px] w-full items-center justify-center border border-[#605e5c] bg-[#e1dfdd]">
          <Svg w={14} h={18} sw={1.300}><ellipse cx="7" cy="3.500" rx="6.300" ry="2.700" /><path d="M0.700 3.500 V14 C0.700 18 13.300 18 13.300 14 V3.500" /></Svg>
        </div>
        <div className="flex h-[32px] items-center"><Svg w={18} h={18} className="ml-[2px]"><path d="M8 17 H0.700 V6.500 H5.500 V17 M5.500 6.500 V0.700 H11 V7" /><path d="M9.500 8.500 V15.500 C9.500 18 17.300 18 17.300 15.500 V8.500" stroke="#e07b1f" strokeWidth="1.400" /><ellipse cx="13.400" cy="8.500" rx="3.900" ry="1.900" stroke="#e07b1f" strokeWidth="1.400" /></Svg></div>
        <div className="flex h-[32px] items-center"><Svg w={12} h={18} sw={1.300} className="mr-px"><path d="M0.700 0.700 H11.300 V17 L6 12.500 L0.700 17 Z" /></Svg></div>
        <div className="flex h-[32px] items-center"><Svg w={18} h={18}><path d="M6.500 0.700 H17.500 V11 H6.500 Z" fill="#fcd98a" stroke="#e8a33d" strokeWidth="1.400" /><path d="M0.700 8.500 H10 V17.300 H0.700 Z" fill="#fff" /><path d="M10 6.500 V17.500 L12.500 15.500 L14.500 19 L16 18 L14.500 14.500 H17.500 Z" fill="#fff" /></Svg></div>
        <div className="flex h-[32px] items-center"><Svg w={17} h={17} sw={1.300} className="mr-px mb-px text-black"><path d="M8.500 0 V17 M0 8.500 H17" /></Svg></div>
      </div>
      <div className="flex h-[32px] w-full items-center justify-center border-t border-[#d2d0ce]">
        <Svg w={20} h={20} sw={1.500}><circle cx="10" cy="10" r="2.800" /><path d="M8.300 1 H11.700 L12.300 3.700 L14.300 4.900 L17 4 L18.700 7 L16.700 8.900 V11.100 L18.700 13 L17 16 L14.300 15.100 L12.300 16.300 L11.700 19 H8.300 L7.700 16.300 L5.700 15.100 L3 16 L1.300 13 L3.300 11.100 V8.900 L1.300 7 L3 4 L5.700 4.900 L7.700 3.700 Z" strokeLinejoin="round" /></Svg>
      </div>
    </nav>
  );
}

/* ---------- page tabs + status ---------- */
function PageTabs() {
  return (
    <div className="flex h-[35px] bg-[#f3f2f1] text-[11.500px] text-[#252423]">
      <div className="ml-[50px] flex w-[24px] flex-col items-center">
        <Svg w={20} h={15} sw={1.600} className="mt-[7px]"><path d="M1 1 H19 V11 H1 Z M10 11 V13.500 M6.500 14 H13.500" /></Svg>
        <div className="mt-[6px] h-[3px] w-full rounded bg-[#117865]" />
      </div>
      <Svg w={13} h={21} sw={1.400} className="mt-[5px] ml-[26px] text-[#605e5c]"><rect x="0.700" y="0.700" width="11.600" height="19.600" rx="1.500" /><path d="M5 17 H8" /></Svg>
      <Svg w={5} h={8} className="mt-[14px] ml-[20px] text-[#c8c6c4]"><path d="M4.500 0 V8 L0 4 Z" fill="currentColor" stroke="none" /></Svg>
      <Svg w={5} h={8} className="mt-[14px] ml-[17px] text-[#c8c6c4]"><path d="M0.500 0 V8 L5 4 Z" fill="currentColor" stroke="none" /></Svg>
      <div className="ml-[7px] flex w-[73px] items-center justify-center border-l border-[#a19f9d]"><Fit w={32}>RELAT</Fit></div>
      <div className="flex w-[84px] items-center justify-center border-x border-b-4 border-x-[#c8c6c4] border-b-[#117865] bg-white pt-[3px]"><Fit w={41.500} className="font-medium">DRELAT</Fit></div>
      <div className="mt-[2px] flex h-[32px] w-[39px] items-center justify-center bg-[#117865] text-white">
        <Svg w={11} h={11} sw={3}><path d="M5.500 0 V11 M0 5.500 H11" /></Svg>
      </div>
    </div>
  );
}

function StatusBar() {
  return (
    <div className="flex h-[24px] items-center justify-between border-t border-[#dad8d6] bg-[#f3f2f1] pr-[6px] pl-[5px] text-[12px] text-[#484644]">
      <Fit w={71}>Página 2 de 2</Fit>
      <div className="flex items-center">
        <Svg w={124} h={12} sw={1.300} className="text-[#605e5c]"><path d="M1 6.500 H6 M116 6 H123 M119.500 2.500 V9.500" strokeWidth="1.400" /><path d="M11 6 H110" /><path d="M62 0.500 V11.500" strokeWidth="3" /></Svg>
        <Fit w={29} className="ml-[14px] text-[#605e5c]">110%</Fit>
        <Svg w={16} h={12} sw={1.100} className="ml-[12px]"><path d="M0.500 0.500 H15.500 V11.500 H0.500 Z M3 5 V3 H5.500 M10.500 3 H13 V5 M13 7 V9 H10.500 M5.500 9 H3 V7" /></Svg>
        <Fit w={221} className="ml-[14px]">Atualização disponível (clique para baixar)</Fit>
      </div>
    </div>
  );
}

/* ---------- taskbar ---------- */
const apps: { dot: boolean; on?: boolean; g: React.ReactNode }[] = [
  { dot: false, g: <><defs><linearGradient id="win" x1="0" y1="0" x2="1" y2="1"><stop offset="0" stopColor="#8fe0fd" /><stop offset="1" stopColor="#1a9cee" /></linearGradient></defs><path d="M1 1 H11.500 V11.500 H1 Z M12.700 1 H23.500 V11.500 H12.700 Z M1 12.700 H11.500 V23.500 H1 Z M12.700 12.700 H23.500 V23.500 H12.700 Z" fill="url(#win)" /></> },
  { dot: true, g: <><path d="M0 2.500 Q0 1 1.500 1 H8 L10.500 4 H22 Q24 4 24 6 V12 H0 Z" fill="#e8a317" /><path d="M0 6.500 H9 L11 5 H24 V21.500 Q24 23 22.500 23 H1.500 Q0 23 0 21.500 Z" fill="#fdd24b" /><path d="M4 23 V17 Q4 15 6 15 H18 Q20 15 20 17 V23 Z" fill="#1c7fd6" /><path d="M8 19.500 H16 V21.500 H8 Z" fill="#0f5ba6" /></> },
  { dot: true, g: <><defs><linearGradient id="fx" x1="1" y1="0" x2="0" y2="1"><stop offset="0" stopColor="#ffe226" /><stop offset=".5" stopColor="#ff7139" /><stop offset="1" stopColor="#f5156c" /></linearGradient></defs><path d="M14 0 C18 2 19 4 19.500 6 C23 9 24 15 21.500 19 C17 26 6 25 2.500 18.500 C-0.500 13 1 8 3.500 5 C3.500 6.500 4 7 4.500 7.500 C6 5 9 5 12 5.500 C12 3 12.500 1.500 14 0 Z" fill="url(#fx)" /><circle cx="12" cy="13.500" r="5" fill="#7542e5" /><path d="M7 12 C9 10 12 11 13 12 C12 14 9 14 8 15 Z" fill="#ff9640" /></> },
  { dot: true, g: <><path d="M6 1 H24 V23 H6 Z" fill="#21a366" /><path d="M15 1 H24 V7 H15 Z" fill="#33c481" /><path d="M6 12 H15 V23 H6 Z" fill="#185c37" /><path d="M15 12 H24 V18 H15 Z" fill="#107c41" /><rect x="-1" y="6" width="13" height="13" rx="1.500" fill="#107c41" /><path d="M2.500 9 L8.500 16 M8.500 9 L2.500 16" stroke="#fff" strokeWidth="1.800" /></> },
  { dot: false, g: <><path d="M6 1 H24 V23 H6 Z" fill="#185abd" /><path d="M6 1 H24 V7 H6 Z" fill="#41a5ee" /><path d="M6 7 H24 V12.500 H6 Z" fill="#2b7cd3" /><path d="M6 18 H24 V23 H6 Z" fill="#103f91" /><rect x="-1" y="6" width="13" height="13" rx="1.500" fill="#185abd" /><path d="M1.500 9 L3.500 16 L5.500 10 L7.500 16 L9.500 9" stroke="#fff" strokeWidth="1.500" fill="none" /></> },
  { dot: true, g: <><path d="M3 2 H21 V24 H3 Z" fill="#50c8e8" /><path d="M3 22 H21 V24.500 H3 Z" fill="#c05a2a" /><path d="M3 20.500 H21 V22 H3 Z" fill="#e8e8e8" /><path d="M6 7.500 H18 M6 11.500 H18 M6 15.500 H18" stroke="#0b6f94" strokeWidth="2" /><path d="M5 0.500 V4 M8.500 0.500 V4 M12 0.500 V4 M15.500 0.500 V4 M19 0.500 V4" stroke="#0b6f94" strokeWidth="1.500" /></> },
  { dot: true, g: <><path d="M2 1 H20 V22 H2 Z" fill="#8fa9d8" /><path d="M3.500 2.500 H10.500 V8 H3.500 Z M12 2.500 H18.500 V8 H12 Z M3.500 9.500 H10.500 V15 H3.500 Z M12 9.500 H18.500 V15 H12 Z M3.500 16.500 H10.500 V20.500 H3.500 Z" fill="#d5e2f5" /><circle cx="16.800" cy="16" r="6.500" fill="#1fc01f" /><path d="M15 12.500 L20 16 L15 19.500 Z" fill="#fff" /></> },
  { dot: false, on: true, g: <><rect x="13" y="0" width="8.500" height="24" rx="1" fill="#e0a010" /><rect x="7.500" y="6" width="8.500" height="18" rx="1" fill="#f2c030" /><rect x="2.500" y="12" width="8.500" height="12" rx="1" fill="#fbdc6a" /></> },
];

function Taskbar() {
  return (
    <footer className="flex h-[49px] items-center border-t border-black bg-[linear-gradient(90deg,#1b212b_0px,#1b222c_330px,#12244f_380px,#10205c_480px,#0f1d62_620px,#13214a_760px,#101c60_800px,#101c60_930px,#1a1f43_980px,#1a2044_1090px,#0f1f62_1180px,#112358_1300px,#1b202e_1340px,#1b1f28_1500px,#1b2129_1920px)] text-white">
      <div className="ml-[787px] flex gap-[4px]">
        {apps.map((a, i) => (
          <div key={i} className={"flex h-[40px] w-[40px] flex-col items-center rounded-[5px] pt-[7px] " + (a.on ? "border border-white/10 bg-white/10" : "border border-transparent")}>
            <svg width="23" height="24" viewBox="0 0 24 25" className="shrink-0 overflow-visible">{a.g}</svg>
            {a.dot && <span className="mt-[4px] h-[3px] w-[6px] rounded-full bg-[#9a9fb5]" />}
            {a.on && <span className="mt-[4px] h-[3px] w-[16px] rounded-full bg-[#4cc2ff]" />}
          </div>
        ))}
      </div>
      <div className="ml-auto flex items-center pr-[19px] text-[12px] leading-4">
        <Svg w={10} h={6} sw={1.400} className="mr-px"><path d="M0.500 5.500 L5 1 L9.500 5.500" /></Svg>
        <Svg w={17} h={17} sw={1.400} className="ml-[20px]"><path d="M1.500 8 C1.500 2.500 7 -0.500 12 2.500 M14 -0.500 V3.500 H10 M2 16 C4 17 5 16.500 6.500 16 M1 12 L2 16.500 M2 12 H6" /><circle cx="12.500" cy="12" r="4.200" fill="#ff9d0a" stroke="none" /></Svg>
        <div className="ml-[16px] flex w-[28px] flex-col items-center"><Fit w={23}>POR</Fit><Fit w={27}>PTB2</Fit></div>
        <Svg w={17} h={16} className="ml-[16px]"><path d="M11 11.500 H1 V1 H10 M5 11.500 V15 M2.500 15.500 H9 M11.500 1 H16 V6 H11.500 Z M13.800 6 V15 H9" /></Svg>
        <Svg w={16} h={15} sw={1.200} className="ml-[6px]"><path d="M1 5 H4 L8 1.500 V13.500 L4 10 H1 Z M10 5 C11 6.500 11 8.500 10 10" /><path d="M12 3 C14 6 14 9 12 12 M14 1 C17 5 17 10 14 14" stroke="#6f747c" /></Svg>
        <div className="ml-[17px] flex w-[64px] flex-col items-end"><Fit w={29}>12:27</Fit><Fit w={62}>14/03/2024</Fit></div>
        <svg width="14" height="17" viewBox="0 0 14 17" className="ml-[7px]"><path d="M7 0.500 C3.500 0.500 2 3 2 6 V9.500 L0.300 13 H13.700 L12 9.500 V6 C12 3 10.500 0.500 7 0.500 Z M4.500 14 H9.500 C9 16.500 5 16.500 4.500 14 Z" fill="#9be6fb" /></svg>
        <svg width="25" height="24" viewBox="0 0 25 24" className="ml-[17px] overflow-visible">
          <path d="M7 0.500 H13 C15 0.500 16 2 15 5 L11 15 C10 18 8.500 19 6 19 C1.500 19 0 16 1.500 11 L3.500 4 C4.500 1.500 5 0.500 7 0.500 Z" fill="#1f8ff0" />
          <path d="M2 10 L0.800 15 C0.800 18 3 19 6 19 C8.500 19 10 18 11 15 L12 12 Z" fill="#8fcf4a" />
          <path d="M13 6 H18 C22 6 24 8 23 13 L21.500 18 H11 Z" fill="#c45bd8" />
          <path d="M11 0.500 H13.500 C16 0.500 17 2 18 6 H12 Z" fill="#2d6be0" />
          <path d="M12 12 L14 18 H21.500 L23 12 Z" fill="#f2647c" />
          <rect x="5.500" y="16" width="19" height="8" rx="2" fill="#ffc91f" />
          <text x="8" y="22.800" fontSize="7.500" fontWeight="700" fontFamily="Open Sans, sans-serif" fill="#222" textLength="14">PRE</text>
        </svg>
      </div>
    </footer>
  );
}

export default function App() {
  return (
    <div className="flex h-[1080px] w-[1920px] flex-col overflow-hidden bg-[#f3f2f1] font-['Open_Sans',sans-serif]">
      <TitleBar />
      <div className="relative z-20 h-[126px] bg-[#fafafa] text-[#252423] shadow-[0_1px_4px_rgba(0,0,0,0.2)]">
        <MenuBar />
        <Ribbon />
      </div>
      <div className="flex h-[847px]">
        <div className="flex w-[1706px] flex-col">
          <div className="flex"><LeftRail /><Canvas /><Filters /></div>
          <PageTabs />
        </div>
        <DataPane />
        <RightRail />
      </div>
      <StatusBar />
      <Taskbar />
    </div>
  );
}
